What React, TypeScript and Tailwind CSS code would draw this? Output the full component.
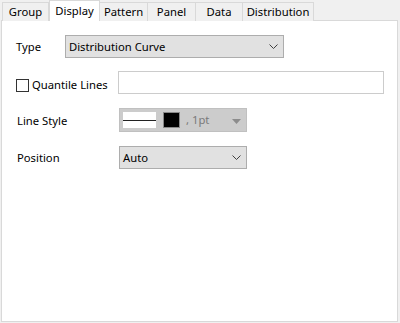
import React from "react";

const tabs = [
  { name: "Group", w: "w-[47px]", active: false },
  { name: "Display", w: "w-[51px]", active: true },
  { name: "Pattern", w: "w-[48px]", active: false },
  { name: "Panel", w: "w-[48px]", active: false },
  { name: "Data", w: "w-[47px]", active: false },
  { name: "Distribution", w: "w-[71px]", active: false },
];

const Chevron = () => (
  <svg width="9" height="5" viewBox="0 0 9 5" className="shrink-0">
    <path d="M0.5 0.5 L4.5 4.5 L8.5 0.5" fill="none" stroke="#404040" strokeWidth="1" />
  </svg>
);

const App = () => {
  return (
    <div
      className="w-[400px] h-[323px] bg-[#f0f0f0] pl-[1px] text-[11.25px] text-black leading-none"
      style={{ fontFamily: '"Segoe UI", "Noto Sans", sans-serif' }}
    >
      {/* tab strip */}
      <div className="flex items-end h-[21px] pl-[1px]">
        {tabs.map((t) =>
          t.active ? (
            <div
              key={t.name}
              className={`${t.w} h-[21px] relative z-10 bg-white border-l border-r border-t border-[#d9d9d9] flex justify-center pt-[4px]`}
            >
              {t.name}
            </div>
          ) : (
            <div
              key={t.name}
              className={`${t.w} h-[19px] bg-[#f0f0f0] border-t border-r border-[#d9d9d9] first:border-l flex justify-center pt-[3px]`}
            >
              {t.name}
            </div>
          )
        )}
      </div>

      {/* panel */}
      <div className="w-[397px] h-[302px] -mt-[1px] bg-white border border-[#d9d9d9] pt-[14px] pl-[14px]">
        {/* Type */}
        <div className="flex items-center h-[23px]">
          <div className="w-[49px] pt-[1px]">Type</div>
          <div className="w-[219px] h-[23px] bg-[#e1e1e1] border border-[#adadad] flex items-center justify-between pl-[3px] pr-[5px]">
            <span>Distribution Curve</span>
            <Chevron />
          </div>
        </div>

        {/* Quantile Lines */}
        <div className="flex items-center h-[23px] mt-[13px]">
          <div className="w-[102px] flex items-center pt-[5px]">
            <div className="w-[13px] h-[13px] border border-[#333333] bg-white" />
            <span className="ml-[3px]">Quantile Lines</span>
          </div>
          <div className="w-[266px] h-[23px] border border-[#cccccc] bg-white" />
        </div>

        {/* Line Style */}
        <div className="flex items-center h-[24px] mt-[14px] pl-[1px]">
          <div className="w-[102px] pt-[1px]">Line Style</div>
          <div className="w-[128px] h-[24px] bg-[#cccccc] border border-[#c0c0c0] flex items-center pl-[3px] pr-[5px]">
            <div className="w-[33px] h-[16px] bg-white flex items-center">
              <div className="w-full h-px bg-[#222222]" />
            </div>
            <div className="w-[17px] h-[16px] ml-[7px] bg-black border border-[#888888]" />
            <span className="ml-[6px] text-[#7a7a7a]">, 1pt</span>
            <svg width="9" height="5" viewBox="0 0 9 5" className="ml-auto mt-[2px]">
              <path d="M0 0 H9 L4.5 5 Z" fill="#8c8c8c" />
            </svg>
          </div>
        </div>

        {/* Position */}
        <div className="flex items-center h-[23px] mt-[14px] pl-[1px]">
          <div className="w-[102px] pt-[1px]">Position</div>
          <div className="w-[128px] h-[23px] bg-[#e1e1e1] border border-[#adadad] flex items-center justify-between pl-[3px] pr-[5px]">
            <span>Auto</span>
            <Chevron />
          </div>
        </div>
      </div>
    </div>
  );
};

export default App;
